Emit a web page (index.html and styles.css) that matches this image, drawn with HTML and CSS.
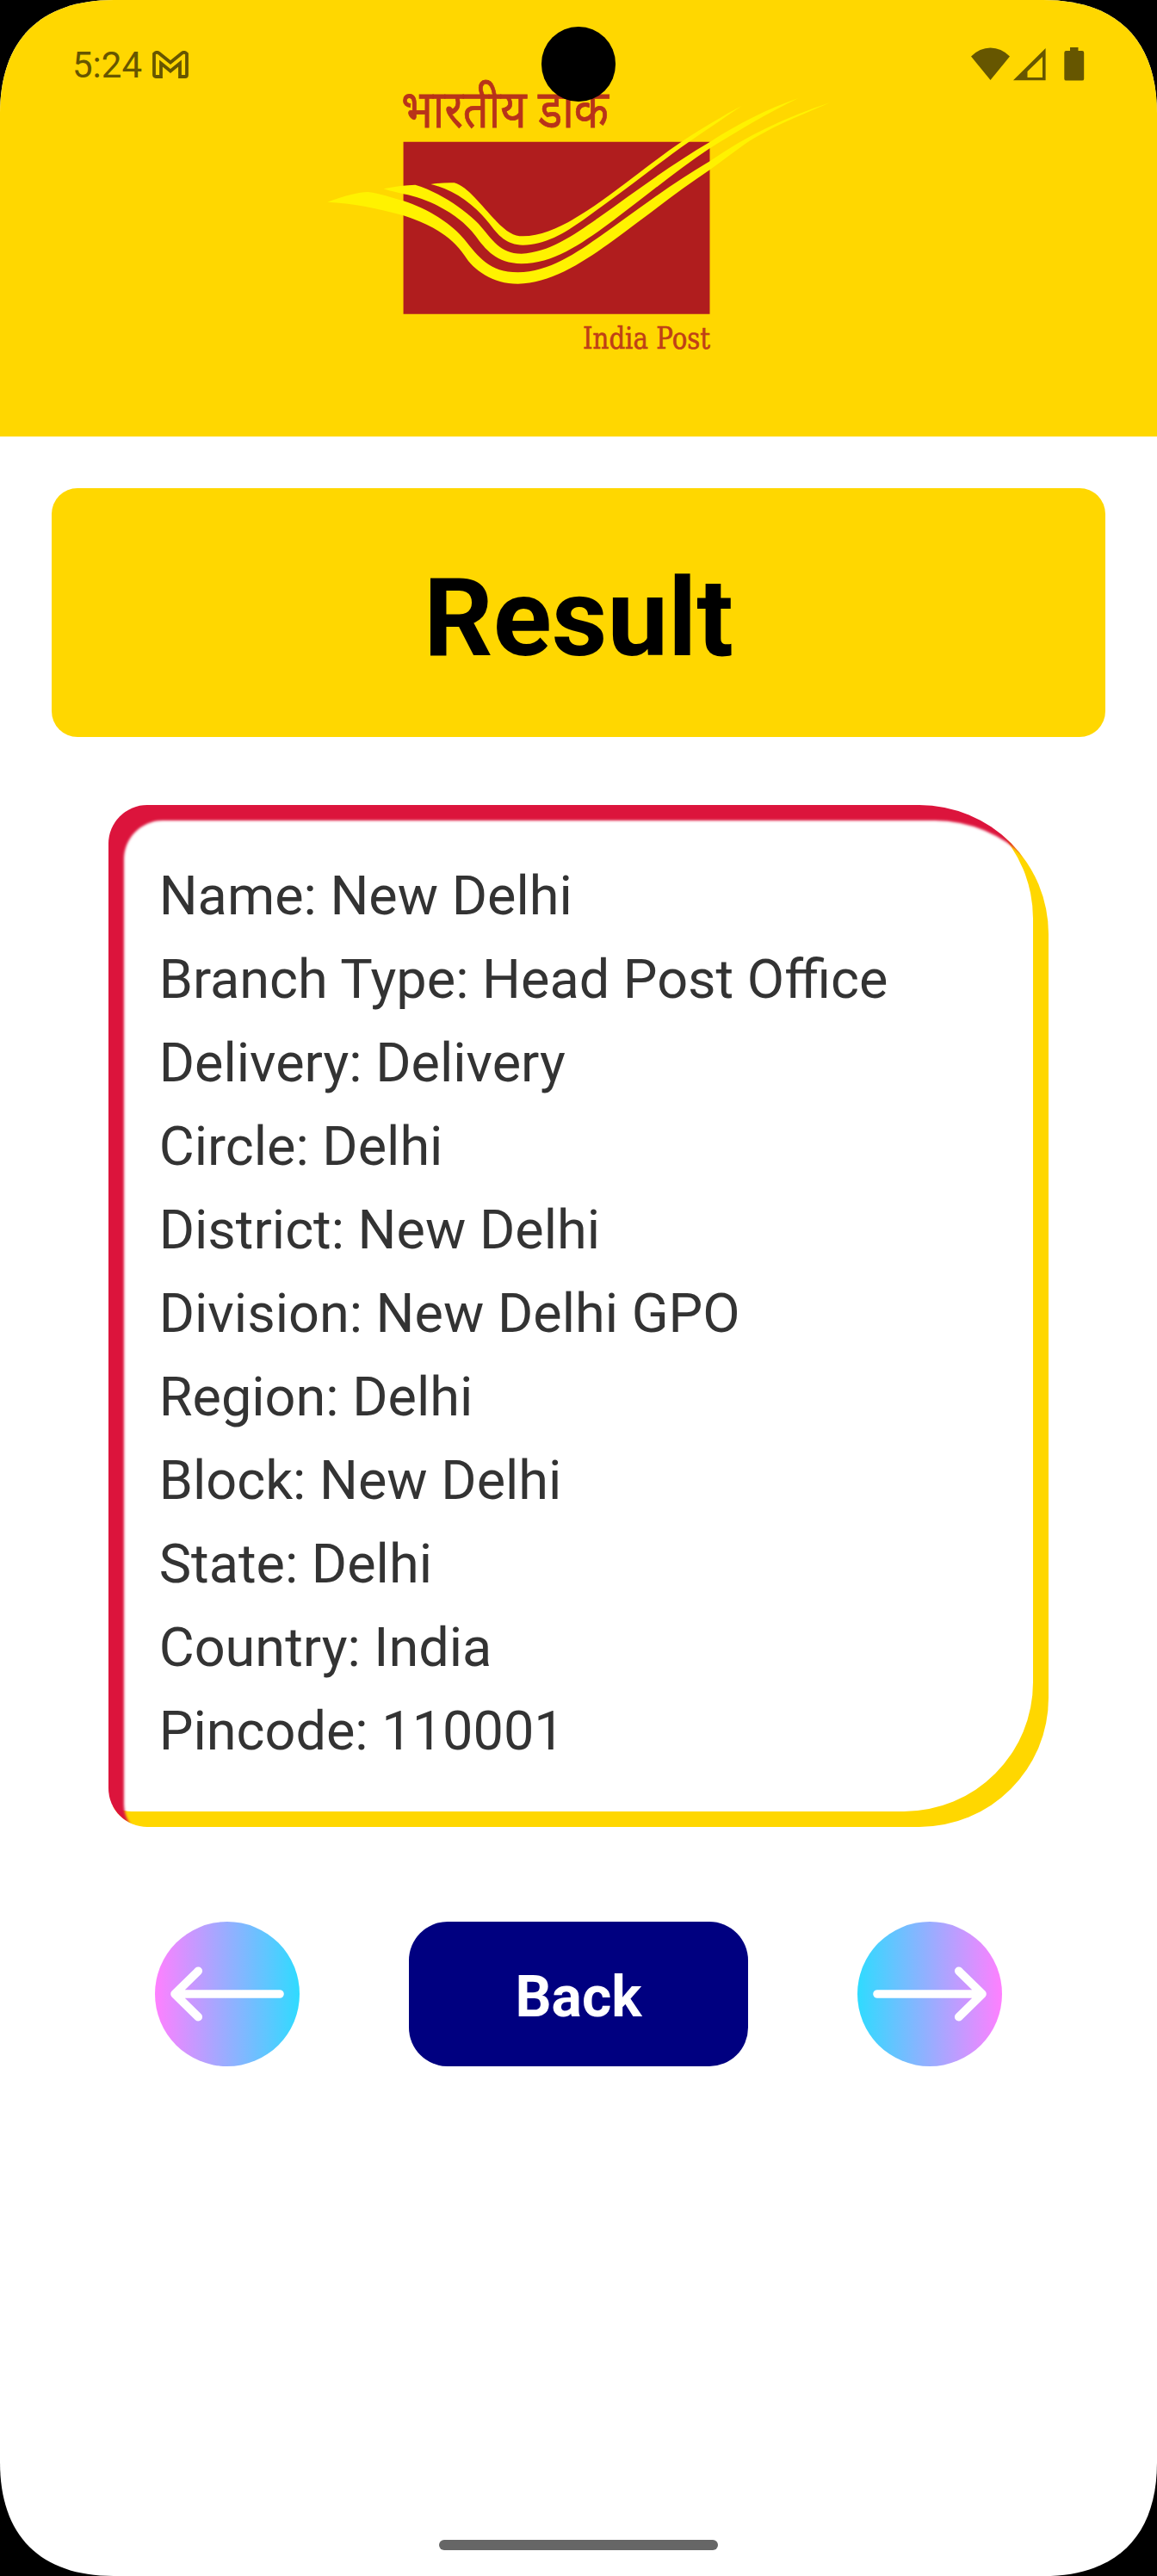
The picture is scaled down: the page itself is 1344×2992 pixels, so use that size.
FILE: index.html
```html
<!DOCTYPE html>
<html lang="en">
<head>
<meta charset="utf-8">
<title>India Post – Result</title>
<link rel="stylesheet" href="styles.css">
</head>
<body>
<div class="screen">
  <header class="header">
    <div class="status">
      <div class="status-left">
        <span class="clock">5:24</span>
        <svg class="gmail" width="42" height="32" viewBox="0 0 42 32"><path d="M2 3.5Q5 .5 8 3L21 13.500 34 3Q37 .5 40 3.500V28Q40 30 38 30H32V14.500L21 23.500 10 14.500V30H4Q2 30 2 28Z" fill="none" stroke="currentColor" stroke-width="3.800"/></svg>
      </div>
      <svg class="signals" width="132" height="40" viewBox="0 0 132 40" fill="currentColor"><path d="M0 10.500Q10 .5 22.500.5T45 10.500L22.500 38Z"/><path fill-rule="evenodd" d="M49 38.300 86.600 1V38.300ZM65.500 35H83V11L65.500 28Z"/><path d="M115 0h9.500v4H129q2.200 0 2.200 2.200V36.400q0 2.200-2.200 2.200H110.500q-2.200 0-2.200-2.200V6.200q0-2.200 2.200-2.200H115Z"/></svg>
    </div>
    <svg class="logo" width="640" height="370" viewBox="0 0 640 370">
      <text class="logo-hindi" x="106" y="87.500" textLength="241" lengthAdjust="spacingAndGlyphs">भारतीय डाक</text>
      <g transform="scale(.408163 .333333)">
        <path fill="#b01d1e" d="M266 314H1138V914H266Z"/>
        <g fill="#fff200">
          <path d="M344 462Q370 456 411 457C450 470 490 540 530 590C560 628 580 643 606 643C680 643 760 580 830 520C920 440 990 370 1060 312C1120 265 1180 220 1228 190C1180 230 1130 272 1079 314C1000 382 920 460 850 522C760 602 690 674 606 674C560 674 535 640 510 598C470 535 410 480 344 462Z"/>
          <path d="M210 478Q260 465 300 464C370 490 440 550 480 600C520 655 540 704 602 704C680 700 750 640 820 580C920 493 1020 400 1138 315C1220 250 1300 200 1390 162C1300 215 1220 275 1138 337C1030 425 940 520 850 600C770 672 690 739 602 739C530 737 500 690 470 640C430 575 350 515 266 496C240 488 225 485 210 478Z"/>
          <path d="M50 524Q130 488 166 489C200 495 230 507 266 520C330 545 400 595 440 655C480 715 510 769 592 769C680 769 760 700 830 640C930 552 1030 460 1138 382C1240 295 1360 225 1480 178C1380 230 1310 265 1240 320C1205 350 1170 384 1138 412C1040 492 940 590 850 670C770 740 680 809 592 809C520 809 465 760 440 710C400 640 340 600 266 571C190 545 120 528 50 524Z"/>
        </g>
      </g>
      <text class="logo-name" x="317" y="345" textLength="148" lengthAdjust="spacingAndGlyphs">India Post</text>
    </svg>
    <div class="camera"></div>
  </header>
  <main class="main">
    <h1 class="banner">Result</h1>
    <section class="card">
      <p>Name: New Delhi</p>
      <p>Branch Type: Head Post Office</p>
      <p>Delivery: Delivery</p>
      <p>Circle: Delhi</p>
      <p>District: New Delhi</p>
      <p>Division: New Delhi GPO</p>
      <p>Region: Delhi</p>
      <p>Block: New Delhi</p>
      <p>State: Delhi</p>
      <p>Country: India</p>
      <p>Pincode: 110001</p>
    </section>
    <nav class="actions">
      <button class="arrow arrow-prev" aria-label="Previous"><svg width="168" height="168" viewBox="0 0 168 168"><path d="M145 84H23M50.300 57.300 23 84 50.300 110.700"/></svg></button>
      <button class="back">Back</button>
      <button class="arrow arrow-next" aria-label="Next"><svg width="168" height="168" viewBox="0 0 168 168"><path d="M23 84H145M117.700 57.300 145 84 117.700 110.700"/></svg></button>
    </nav>
  </main>
  <div class="home-bar"></div>
</div>
</body>
</html>
```
FILE: styles.css
```css
* { box-sizing: border-box; }
html, body { margin: 0; background: #000; }
body { width: 1344px; font-family: Roboto, sans-serif; }
.screen {
  position: relative;
  display: flex;
  flex-direction: column;
  width: 1344px;
  height: 2992px;
  background: #fff;
  clip-path: path("M0 132C0 46.7 46.7 0 132 0H1212C1297.300 0 1344 46.700 1344 132V2860C1344 2945.300 1297.300 2992 1212 2992H132C46.700 2992 0 2945.300 0 2860Z");
  overflow: hidden;
}
.header { position: relative; height: 507px; background: #ffd700; }
.status {
  display: flex;
  justify-content: space-between;
  align-items: flex-start;
  padding: 55px 84px 0;
  color: #665600;
}
.status-left { display: flex; gap: 12px; }
.clock { font-size: 42px; line-height: 42px; }
.gmail { margin-top: 4px; }
.logo { position: absolute; left: 360px; top: 60px; }
.logo-hindi { font: 61px "Noto Sans", "Noto Sans Devanagari", sans-serif; fill: #b8331a; stroke: #b8331a; stroke-width: .8px; }
.logo-name { font: 36px "DejaVu Serif", serif; fill: #bf3f17; stroke: #bf3f17; stroke-width: .7px; }
.camera {
  position: absolute;
  left: 628.7px;
  top: 31.3px;
  width: 86.7px;
  height: 86.7px;
  border-radius: 50%;
  background: #000;
}
.main { flex: 1; display: flex; flex-direction: column; align-items: center; padding-top: 60px; }
.banner {
  width: 1224px;
  height: 289px;
  margin: 0;
  border-radius: 30px;
  background: #ffd700;
  color: #000;
  font-size: 126px;
  font-weight: 700;
  line-height: 302px;
  text-align: center;
}
.card {
  width: 1092.67px;
  height: 1187px;
  margin-top: 79px;
  padding: 57px 59px 0;
  border-radius: 45px 150px 150px 45px;
  box-shadow: inset 18px 18px 3px #dc143c, inset -18px -18px 0 #ffd700;
}
.card p { margin: 0; color: #333; font-size: 63px; line-height: 97px; white-space: nowrap; }
.actions { display: flex; justify-content: space-between; width: 984px; margin-top: 110px; }
.actions button { height: 168px; padding: 0; border: 0; font-family: inherit; }
.arrow { width: 168px; border-radius: 50%; }
.arrow svg { display: block; fill: none; stroke: #fff; stroke-width: 9.6px; stroke-linecap: round; stroke-linejoin: round; }
.arrow-prev { background: linear-gradient(90deg, #ff80ff, #2fdbff); }
.arrow-next { background: linear-gradient(90deg, #2fdbff, #ff80ff); }
.actions .back {
  width: 394px;
  padding-top: 6px;
  border-radius: 45px;
  background: navy;
  color: #fff;
  font-size: 66px;
  font-weight: 700;
}
.home-bar {
  align-self: center;
  width: 324px;
  height: 12px;
  margin-bottom: 30px;
  border-radius: 6px;
  background: #666;
}
```
